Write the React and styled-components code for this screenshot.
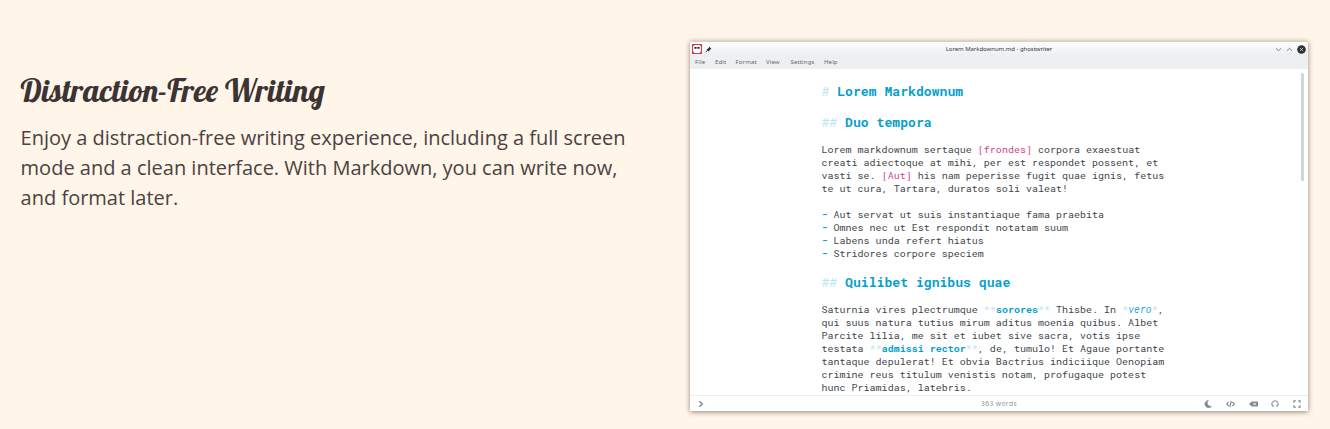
import React from 'react';
import styled, { createGlobalStyle } from 'styled-components';

const Global = createGlobalStyle`
  * { box-sizing: border-box; }
  body { margin: 0; background: #fff5e8; overflow: hidden; }
`;

const Section = styled.section`
  display: flex;
  align-items: flex-start;
  width: 1330px;
  height: 429px;
  background: #fff5e8;
`;

const Intro = styled.div`
  width: 690px;
  padding: 69px 40px 0 20.6px;
`;

const Title = styled.h2`
  margin: 0 0 12px;
  font: 400 32px/42px Lobster, 'Liberation Serif', serif;
  color: #3b3334;
  white-space: nowrap;
`;

const Lead = styled.p`
  margin: 0;
  font: 400 20px/30px 'Open Sans', sans-serif;
  color: #4a4243;
  white-space: nowrap;
`;

const Window = styled.div`
  display: flex;
  flex-direction: column;
  width: 618px;
  height: 370px;
  margin-top: 41px;
  background: #fff;
  border-radius: 2px 2px 0 0;
  box-shadow: 0 1px 5px rgba(70, 55, 40, 0.6);
`;

const Chrome = styled.header`
  height: 28px;
  border-top: 1px solid #d5d0ca;
  border-radius: 2px 2px 0 0;
  background: linear-gradient(#fdfdfd, #eeeff1 13px);
`;

const TitleBar = styled.div`
  display: grid;
  grid-template-columns: 1fr auto 1fr;
  align-items: center;
  height: 14px;
  padding: 0 2px;
`;

const Caption = styled.span`
  font: 6px/14px 'Noto Sans', sans-serif;
  letter-spacing: -0.04px;
  color: #35393c;
`;

const Cluster = styled.div`
  display: flex;
  align-items: center;
  gap: ${(p) => p.$gap}px;
  justify-content: ${(p) => (p.$end ? 'flex-end' : 'flex-start')};
`;

const MenuBar = styled.nav`
  display: flex;
  height: 13px;
  padding-left: 5px;
`;

const MenuItem = styled.span`
  width: ${(p) => p.$width}px;
  font: 6px/13px 'Noto Sans', sans-serif;
  letter-spacing: 0.15px;
  color: #62676b;
`;

const Editor = styled.main`
  display: flex;
  justify-content: space-between;
  height: 326px;
  padding: 4px 4px 0 131.5px;
  overflow: hidden;
`;

const Page = styled.div`
  padding-top: 9px;
  font-family: 'Roboto Mono', 'DejaVu Sans Mono', monospace;
  white-space: pre;
  color: #42474b;
`;

const Heading = styled.h3`
  margin: 0 0 ${(p) => p.$after}px;
  font-size: 13.12px;
  line-height: 18px;
  font-weight: 700;
  color: #069fcc;
`;

const Block = styled.div`
  margin-bottom: ${(p) => p.$after}px;
  font-size: 9.97px;
  letter-spacing: 0.03px;
  line-height: 13px;
`;

const Mark = styled.span`
  font-weight: 400;
  font-style: normal;
  color: #bfe4f1;
`;

const Link = styled.span`
  color: #cf3f91;
`;

const Strong = styled.strong`
  color: #069fcc;
`;

const Em = styled.em`
  color: #1fa9d2;
`;

const ScrollBar = styled.div`
  width: 3px;
  height: 108px;
  border-radius: 2px;
  background: #d3d4d5;
`;

const Status = styled.footer`
  display: grid;
  grid-template-columns: 1fr auto 1fr;
  align-items: center;
  height: 16px;
  padding: 0 7px;
  border-top: 1px solid #ececed;
  color: #8a939b;
`;

const Words = styled.span`
  font: 6.6px/15px 'Noto Sans', sans-serif;
  letter-spacing: 0.45px;
`;

const Icon = styled.svg`
  display: block;
  flex: none;
  width: ${(p) => p.$w || 8}px;
  height: ${(p) => p.$h || 8}px;
  fill: none;
  stroke: ${(p) => p.$color || '#7d8993'};
  stroke-width: 1.2;
`;

const menus = [
  ['File', 20],
  ['Edit', 20.5],
  ['Format', 30.5],
  ['View', 24.5],
  ['Settings', 33.5],
  ['Help', 20],
];

export default function App() {
  return (
    <>
      <Global />
      <Section>
        <Intro>
          <Title>Distraction-Free Writing</Title>
          <Lead>
            Enjoy a distraction-free writing experience, including a full screen
            <br />
            mode and a clean interface. With Markdown, you can write now,
            <br />
            and format later.
          </Lead>
        </Intro>
        <Window>
          <Chrome>
            <TitleBar>
              <Cluster $gap={3}>
                <Icon $w={10} $h={10} viewBox="0 0 10 10">
                  <rect x="0.5" y="0.5" width="9" height="9" rx="0.5" fill="#fff" stroke="#c8444d" />
                  <path d="M0 0h3.6L0 3.6zM10 0v3.6L6.4 0zM0 10V6.4L3.6 10zM10 10H6.4L10 6.4z" fill="#c8444d" stroke="none" />
                  <path d="M2.4 3.9h2.2M5.4 3.9h2.2" stroke="#25282a" strokeWidth="1.8" />
                </Icon>
                <Icon $w={7} $h={7} viewBox="0 0 7 7">
                  <path d="M4 .6 6.5 3 5.4 3.3 4.3 4.5 4.1 5.8 1.4 3.2 2.7 2.9 3.9 1.7z" fill="#26292c" stroke="none" />
                  <path d="M2.6 4.3.8 6.2" stroke="#26292c" strokeWidth=".9" />
                </Icon>
              </Cluster>
              <Caption>Lorem Markdownum.md - ghostwriter</Caption>
              <Cluster $gap={4} $end>
                <Icon $w={7} $h={7} viewBox="0 0 7 7" $color="#777c80">
                  <path d="M1 2.3l2.5 2.4L6 2.3" strokeWidth="1" />
                </Icon>
                <Icon $w={7} $h={7} viewBox="0 0 7 7" $color="#777c80">
                  <path d="M1 4.7l2.5-2.4L6 4.7" strokeWidth="1" />
                </Icon>
                <Icon $w={9} $h={9} viewBox="0 0 9 9">
                  <circle cx="4.5" cy="4.5" r="4.3" fill="#2b2f32" stroke="none" />
                  <path d="M2.8 2.8l3.4 3.4M6.2 2.8 2.8 6.2" stroke="#dfe1e2" strokeWidth=".8" />
                </Icon>
              </Cluster>
            </TitleBar>
            <MenuBar>
              {menus.map(([label, width]) => (
                <MenuItem key={label} $width={width}>{label}</MenuItem>
              ))}
            </MenuBar>
          </Chrome>
          <Editor>
            <Page>
              <Heading $after={13}><Mark>#</Mark> Lorem Markdownum</Heading>
              <Heading $after={12}><Mark>##</Mark> Duo tempora</Heading>
              <Block $after={13}>
                <div>Lorem markdownum sertaque <Link>[frondes]</Link> corpora exaestuat</div>
                <div>creati adiectoque at mihi, per est respondet possent, et</div>
                <div>vasti se. <Link>[Aut]</Link> his nam peperisse fugit quae ignis, fetus</div>
                <div>te ut cura, Tartara, duratos soli valeat!</div>
              </Block>
              <Block $after={13}>
                <div><Strong>-</Strong> Aut servat ut suis instantiaque fama praebita</div>
                <div><Strong>-</Strong> Omnes nec ut Est respondit notatam suum</div>
                <div><Strong>-</Strong> Labens unda refert hiatus</div>
                <div><Strong>-</Strong> Stridores corpore speciem</div>
              </Block>
              <Heading $after={12}><Mark>##</Mark> Quilibet ignibus quae</Heading>
              <Block $after={0}>
                <div>Saturnia vires plectrumque <Mark>**</Mark><Strong>sorores</Strong><Mark>**</Mark> Thisbe. In <Mark>*</Mark><Em>vero</Em><Mark>*</Mark>,</div>
                <div>qui suus natura tutius mirum aditus moenia quibus. Albet</div>
                <div>Parcite lilia, me sit et iubet sive sacra, votis ipse</div>
                <div>testata <Mark>**</Mark><Strong>admissi rector</Strong><Mark>**</Mark>, de, tumulo! Et Agaue portante</div>
                <div>tantaque depulerat! Et obvia Bactrius indiciique Oenopiam</div>
                <div>crimine reus titulum venistis notam, profugaque potest</div>
                <div>hunc Priamidas, latebris.</div>
              </Block>
            </Page>
            <ScrollBar />
          </Editor>
          <Status>
            <Icon viewBox="0 0 8 8"><path d="M2.4 1.2 5.2 4 2.4 6.8" strokeWidth="1.5" /></Icon>
            <Words>363 words</Words>
            <Cluster $gap={13.7} $end>
              <Icon viewBox="0 0 8 8">
                <path d="M4.3.5A3.6 3.6 0 1 0 7.4 6.3 3.4 3.4 0 0 1 4.3.5z" fill="#7d8993" stroke="#7d8993" strokeWidth=".7" />
              </Icon>
              <Icon $w={9} viewBox="0 0 9 8">
                <path d="M2.6 1.8.7 4l1.9 2.2M6.4 1.8 8.3 4 6.4 6.2M5.2.9 3.8 7.1" strokeWidth="1.2" />
              </Icon>
              <Icon $w={9} viewBox="0 0 9 8">
                <path d="M2.8 1.5H9v5H2.8L0 4z" fill="#7d8993" stroke="none" />
                <path d="M4.3 2.7l2.6 2.6M6.9 2.7 4.3 5.3" stroke="#fff" strokeWidth=".9" />
              </Icon>
              <Icon viewBox="0 0 8 8">
                <path d="M.8 5V4a3.2 3.2 0 0 1 6.4 0v1" strokeWidth="1" />
                <path d="M.8 4.5h1.8V7H1.6L.8 6zM7.2 4.5H5.4V7h1l.8-1z" fill="#9aa4ac" stroke="none" />
              </Icon>
              <Icon viewBox="0 0 8 8">
                <path d="M.9 2.8V.9h1.9M5.2.9h1.9v1.9M7.1 5.2v1.9H5.2M2.8 7.1H.9V5.2" strokeWidth="1.1" />
              </Icon>
            </Cluster>
          </Status>
        </Window>
      </Section>
    </>
  );
}
